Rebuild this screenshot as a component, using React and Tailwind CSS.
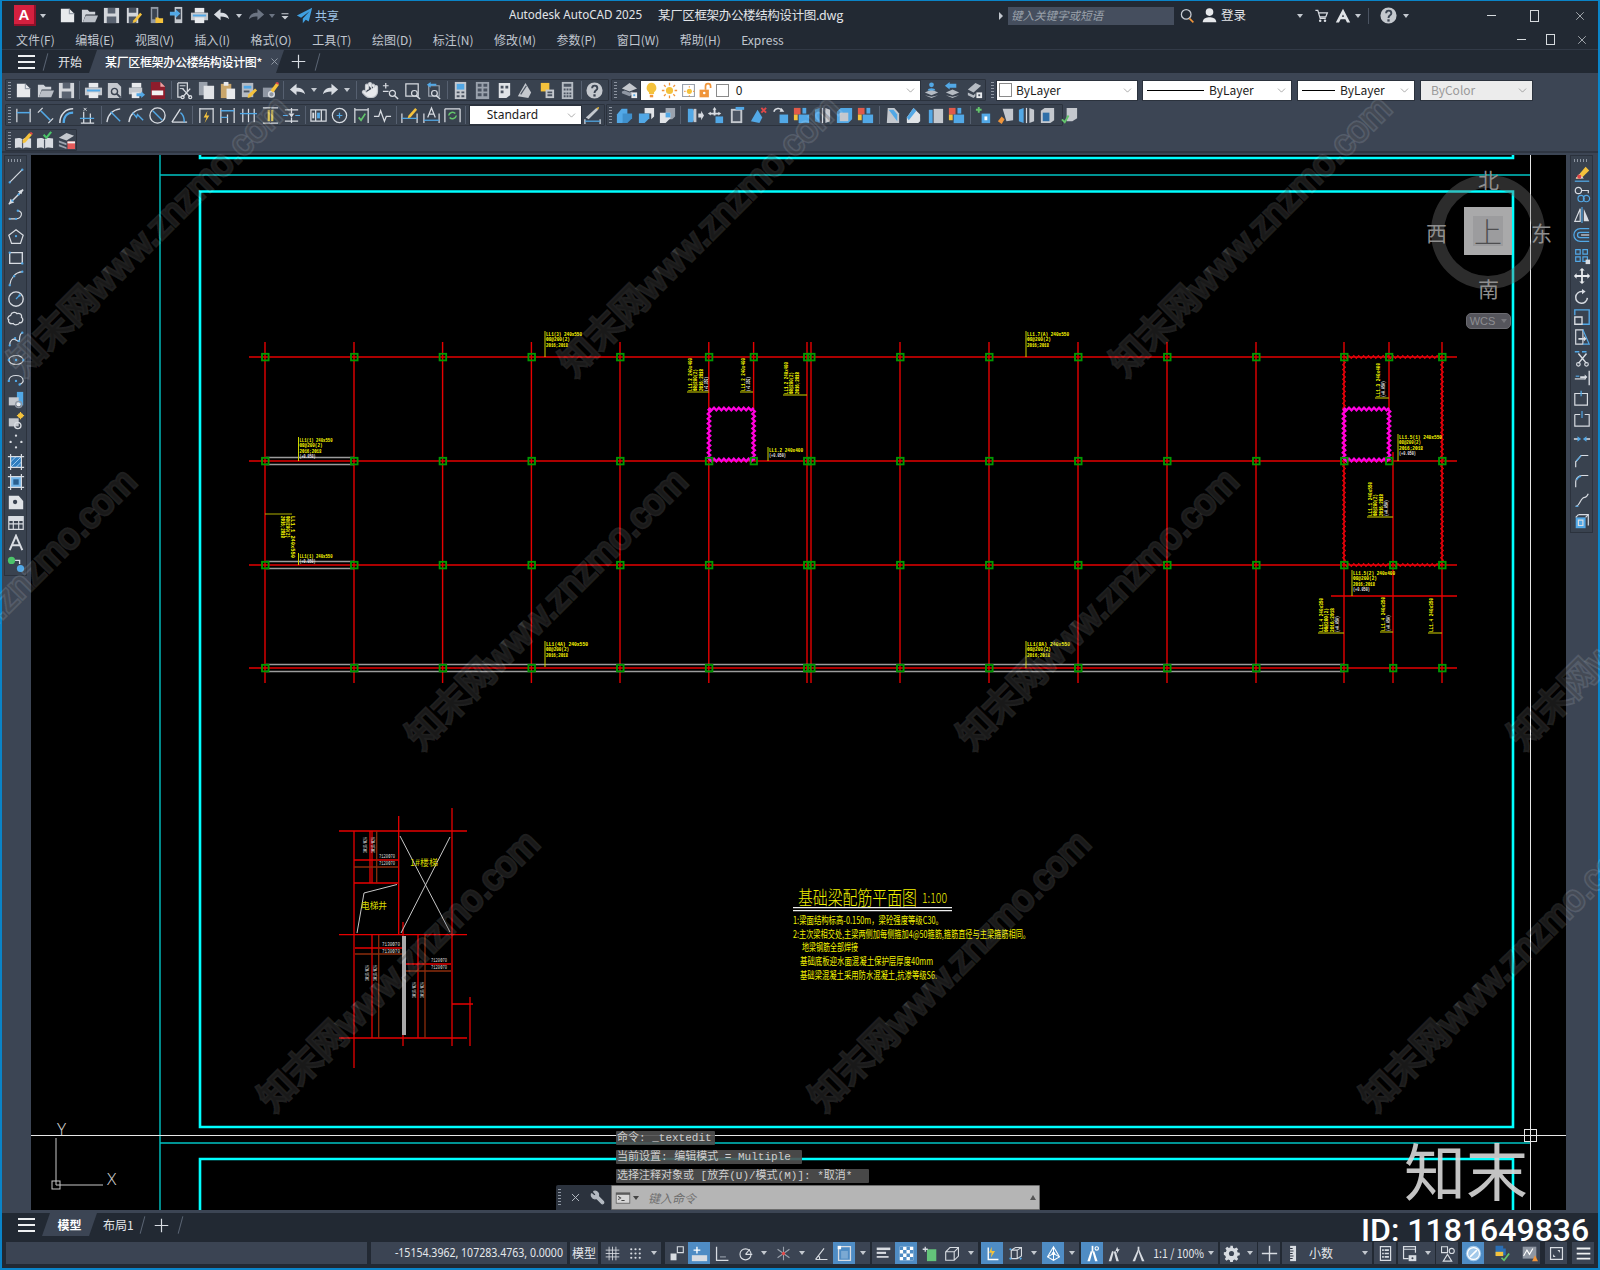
import React from 'react';
import { ChevronDown, Hand, X, Wrench } from 'lucide-react';

const W = '#d8dce2';
const G = '#9aa2ad';
const B = '#52a8e6';
const Y = '#f4c23c';
const O = '#f0953a';
const D = '#3a4351';

const dot = (x, y, r = 1.3) => `M${x - r} ${y}a${r} ${r} 0 1 0 ${2 * r} 0a${r} ${r} 0 1 0 ${-2 * r} 0`;
const dots = (...p) => p.map(([x, y]) => dot(x, y)).join('');

// [kind, path, colour, stroke width]: f = fill, s = stroke
const ICONS = {
  new: [['f', 'M3 3h9l5 5v9H3z', '#e8eaed'], ['s', 'M12 3v5h5', G]],
  open: [['f', 'M2 4h6l2 2h6v3H6l-3 8H2z', '#cfd3d9'], ['f', 'M6 10h13l-3 7H3z', '#b9bec6']],
  save: [['f', 'M2 2h16v16H2z', '#d3d6db'], ['f', 'M6 2h8v6H6zM5 11h10v7H5z', '#5a6371']],
  saveas: [['f', 'M3 2h12v16H3z', '#d3d6db'], ['f', 'M5 2h8v5H5zM5 11h8v7H5z', '#4a5361'], ['f', 'M10 15l7-8 2 2-7 8-3 1z', Y]],
  devOpen: [['f', 'M5 1h8v17H5z', '#8f97a3'], ['f', 'M6.5 3h5v11h-5z', '#3a4351'], ['f', 'M10 12h3l1 1h4v5h-8z', Y]],
  devSave: [['f', 'M7 1h8v17H7z', '#c4c8ce'], ['f', 'M8.5 3h5v11h-5z', '#3a4351'], ['f', 'M2 6h6V3.5L13 8l-5 4.5V10H2z', B]],
  print: [['f', 'M5 2h10v5H5z', '#e8eaed'], ['f', 'M1 7h18v8H1z', '#c4c8ce'], ['f', 'M5 12h10v6H5z', '#e8eaed'], ['f', 'M3 9h14v2H3z', B]],
  undo: [['f', 'M2 9l7-6v4c5 0 8 2 9 7-2-2-5-3-9-3v4z', '#d8dce2']],
  redo: [['f', 'M18 9l-7-6v4c-5 0-8 2-9 7 2-2 5-3 9-3v4z', '#d8dce2']],
  redoDim: [['f', 'M18 9l-7-6v4c-5 0-8 2-9 7 2-2 5-3 9-3v4z', '#6b7482']],
  lines: [['f', 'M5 6h10v1.5H5zM5 10h10l-5 5z', '#c8ccd2']],
  plane: [['f', 'M19 1L1 10l5 2.5L16 5 8 13.5V19l3.5-4 3.5 2z', '#3f9fe0']],
  preview: [['f', 'M3 2h10l4 4v12H3z', '#c4c8ce'], ['s', dot(10, 11, 3.2), '#3a4351', 1.5], ['s', 'M12.5 13.5l4 4', '#3a4351', 2]],
  publish: [['f', 'M5 2h10v5H5z', '#e8eaed'], ['f', 'M2 7h14v7H2z', '#c4c8ce'], ['f', 'M5 12h8v6H5z', '#e8eaed'], ['f', 'M10 13h5v-2l4 3.5-4 3.5v-2h-5z', B]],
  dwf: [['f', 'M3 1h10l5 5v13H3z', '#8e1d2c'], ['f', 'M4 10h12v5H4z', '#f2f2f2'], ['f', 'M13 1v5h5z', '#e9a3a3']],
  cut: [['s', 'M3 2h10v9M3 2v15h4', W], ['s', 'M5 5h6M5 8h4', W, 1], ['s', 'M8 8l8 9M16 8l-8 9', W, 1.5], ['s', dot(8, 17, 1.6) + dot(16, 17, 1.6), W]],
  copy: [['f', 'M2 1h9v14H2z', '#9aa2ad'], ['f', 'M7 5h11v14H7z', '#e0e3e7']],
  paste: [['f', 'M3 3h11v15H3z', '#c9a66b'], ['f', 'M6 1h5v4H6z', '#e8eaed'], ['f', 'M9 8h9v11H9z', '#e8eaed']],
  match: [['f', 'M3 2h12v15H3z', '#b5bbc3'], ['f', 'M5 5h8v3H5z', B], ['f', 'M5 10h6v2H5z', '#4a5361'], ['f', 'M10 14l7-6 2 2-7 7-3 1z', Y]],
  brush: [['f', 'M2 7h12v10H2z', '#8f97a3'], ['s', dot(11, 14, 3), W, 1.5], ['f', 'M10 10l6-8 3 2-6 8z', Y], ['f', 'M15 2l2-1 2 1-1 2z', '#e04848']],
  zoomrt: [['s', 'M2 5h6M5 2v6M2 11h6', W], ['s', dot(12, 13, 3.2), W], ['s', 'M14.5 15.5l3.5 3.5', W, 1.6]],
  zoomwin: [['s', 'M3 3h13v13H3z', W], ['s', dot(12, 13, 3), W], ['s', 'M14 15.5l4 3.5', W, 1.6]],
  zoomprev: [['s', 'M5 5h11v11H5z', G], ['f', 'M3 4l4-3v2h6v2H7v2z', B], ['s', dot(11, 13, 3), W], ['s', 'M13 15.5l4 3.5', W, 1.6]],
  props: [['f', 'M4 1h12v18H4z', '#c4c8ce'], ['f', 'M6 3h8v6H6z', B], ['f', 'M6 11h3v2H6zM11 11h3v2h-3zM6 15h3v2H6zM11 15h3v2h-3z', '#4a5361']],
  dc: [['f', 'M3 1h14v18H3z', '#9aa2ad'], ['f', 'M5 3h4v3H5zM11 3h4v3h-4zM5 8h4v3H5zM11 8h4v3h-4zM5 13h4v3H5zM11 13h4v3h-4z', '#4a5361']],
  palette: [['f', 'M5 2h12v13l-4 3H5z', '#e0e3e7'], ['f', 'M7 5h3v3H7zM12 5h3v3h-3zM7 10h3v3H7z', '#4a5361']],
  sheet: [['f', 'M3 16L11 2l6 10-3 6z', '#c4c8ce'], ['s', 'M6 14l6-9', '#4a5361']],
  markup: [['f', 'M4 2h9v9H4z', Y], ['f', 'M9 9h9v9H9z', '#c4c8ce'], ['f', 'M11 11h5v2h-5zM11 14h5v2h-5z', '#4a5361']],
  calc: [['f', 'M4 1h12v18H4z', '#b5bbc3'], ['f', 'M6 3h8v3H6zM6 8h2v2H6zM9 8h2v2H9zM12 8h2v2h-2zM6 12h2v2H6zM9 12h2v2H9zM12 12h2v2h-2zM6 15h2v2H6zM9 15h2v2H9zM12 15h2v2h-2z', '#4a5361']],
  help: [['f', dot(10, 10, 8.5), '#c4c8ce'], ['s', 'M7.5 7.5c0-3.5 5.5-3.5 5.5 0 0 2.5-3 2-3 5', '#3a4351', 2], ['f', 'M8.8 14h2.4v2.4H8.8z', '#3a4351']],
  layer: [['f', 'M2 8l8-6 8 6-8 3z', '#c4c8ce'], ['f', 'M2 11l3-1 5 2 3-1v3l-3 2-8-3z', '#8f97a3'], ['f', 'M12 12h6v6h-6z', '#e8eaed'], ['f', 'M14 14h2v2h-2z', B]],
  layerA: [['f', 'M3 12l7-3 7 3-7 3zM3 15l7 3 7-3-7 1.5z', '#b5bbc3'], ['f', dot(10, 4, 2.5), B], ['f', 'M6 10c0-3 8-3 8 0z', B]],
  layerB: [['f', 'M3 12l7-3 7 3-7 3zM3 15l7 3 7-3-7 1.5z', '#b5bbc3'], ['f', 'M2 5l5-4v2h7v4H7v2z', B]],
  layerC: [['f', 'M3 9l8-7 6 3-8 7zM3 12l6 3 2-2v3l-2 2-6-3z', '#b5bbc3'], ['f', 'M12 12h6v6h-6z', '#e8eaed'], ['f', 'M14 14h2v2h-2z', '#4a5361']],
  bookPen: [['f', 'M1 8c3-1 6-1 8 1 2-2 5-2 9-1v10c-4-1-7-1-9 1-2-2-5-2-8-1z', '#d8dce2'], ['s', 'M9 9v10', '#4a5361'], ['f', 'M9 10l7-8 3 2-7 8-3 1z', Y], ['f', 'M16 2l2-1 2 2-1 1z', '#e04848']],
  bookChk: [['f', 'M1 8c3-1 6-1 8 1 2-2 5-2 9-1v10c-4-1-7-1-9 1-2-2-5-2-8-1z', '#d8dce2'], ['s', 'M9 9v10', '#4a5361'], ['s', 'M8 4l3 3 5-6', '#4cc46a', 2.2]],
  layerRed: [['f', 'M2 7l8-5 8 3-8 5z', '#c4c8ce'], ['f', 'M2 10l8 3v2l-8-3zM2 14l8 3v2l-8-3z', '#9aa2ad'], ['f', 'M11 11h8v8h-8z', '#e45a5a'], ['f', 'M11 11h8v2h-8z', '#f2f2f2']],
  dimLinear: [['s', 'M3 3v14M17 3v14', W], ['s', 'M3 7h14', B, 1.6]],
  dimAligned: [['s', 'M2 7l5-5M13 18l5-5', W], ['s', 'M5 5l10 10', B, 1.6]],
  dimArc: [['s', 'M3 18C3 9 9 3 17 3', W, 1.6], ['s', 'M7 18C7 11 11 7 17 7', B, 2.4]],
  dimOrd: [['s', 'M3 18h14M6 18V6M13 18V8', W], ['s', 'M2 13h15', B], ['s', 'M6 2l3 3M9 2L6 5', W, 1]],
  dimRad: [['s', 'M2 17C3 9 8 4 16 3', W, 1.4], ['s', 'M6 6l10 10', B, 1.5]],
  dimJog: [['s', 'M2 17C3 9 8 4 16 3', W, 1.4], ['s', 'M6 7l4 5 1-3 6 6', B, 1.5]],
  dimDia: [['s', dot(10, 10, 8), W, 1.4], ['s', 'M5 5l10 10', B, 1.5]],
  dimAng: [['s', 'M2 17h16M2 17L11 3', W, 1.4], ['s', 'M11 7c3 2 4 6 4 10', B, 1.5]],
  dimQuick: [['s', 'M3 2v16M17 2v16M3 3h14', W], ['f', 'M11 5l-4 7h3l-2 6 5-8h-3z', Y]],
  dimBase: [['s', 'M3 2v16M17 2v16M10 9v9', W], ['s', 'M3 5h14M3 12h7', B, 1.4]],
  dimCont: [['s', 'M4 3v14M10 3v14M16 3v14', W], ['s', 'M1 8h18', B, 1.4]],
  dimSpace: [['f', 'M7 4h6v12H7z', '#d9c45a'], ['s', 'M2 2h16M2 18h16', W, 1.5], ['s', 'M10 2v16', '#4a5361']],
  dimBreak: [['s', 'M3 4h14M10 2v6M10 12v6M3 16h14', W], ['f', 'M7 8h6l-3 4z', W], ['s', 'M1 10h5M14 10h5', B]],
  tol: [['s', 'M2 4h16v12H2zM7 4v12M13 4v12', W], ['f', 'M3.5 7h2v6h-2z', W], ['f', 'M8.5 7h3v6h-3z', B]],
  center: [['s', dot(10, 10, 7.5), W], ['s', 'M10 7v6M7 10h6', B]],
  inspect: [['s', 'M3 2v16M17 2v16M3 4h14', W], ['f', 'M7 9h7v7H7z', '#3a4351'], ['s', 'M7 12l2.5 3L14 8', '#63c46b', 1.8]],
  jogline: [['s', 'M1 11h5l2-6 4 11 2-5h5', W]],
  dimEdit: [['s', 'M2 8v10M18 8v10', W], ['s', 'M2 13h16', B], ['f', 'M9 10l7-8 2 2-7 8-3 1z', Y]],
  dimText: [['s', 'M2 8v10M18 8v10', W], ['s', 'M2 15h16', B], ['s', 'M6 12L10 2l4 10M7.5 8.5h5', W]],
  dimUpd: [['s', 'M2 3v14M18 3v14M2 3h16', W], ['s', 'M6 10a4 4 0 0 1 7-2M14 10a4 4 0 0 1-7 2', '#63c46b', 1.6]],
  dimStyle: [['s', 'M2 14v5M18 14v5', W], ['s', 'M2 16h16', B], ['f', 'M3 12L14 2l2 2L6 14z', '#c4c8ce'], ['f', 'M14 2l2 2 1-3z', Y]],
  uni: [['f', 'M2 9l5-6h6v9l-5 6H2z', B], ['f', 'M8 8h10v5l-5 5H8z', '#3f8fcb']],
  sub: [['f', 'M8 2h10v9l-3 3V8H8z', '#e0e3e7'], ['f', 'M2 8h11v5l-5 5H2z', B]],
  int: [['f', 'M8 2h10v9l-3 3H8z', '#9aa2ad'], ['f', 'M2 7h11v6l-5 5H2z', '#e0e3e7'], ['f', 'M8 7h5v5H8z', B]],
  ext: [['f', 'M3 3h5c3 3 3 11 0 14H3z', B], ['f', 'M9 3h3v14H9z', '#c4c8ce'], ['f', 'M14 8h3V5l3 5-3 5v-3h-3z', W]],
  move3: [['f', 'M9 1l2 3h-1v3h3V6l3 2-3 2V9h-3v1H8V9H5v1L2 8l3-2v1h3V4H7z', W], ['f', 'M10 11h8v7h-8z', B]],
  copy3: [['f', 'M3 3h12v15H3z', '#c4c8ce'], ['f', 'M5 5h8v11H5z', '#4a5361'], ['f', 'M8 1h9v3H8z', B]],
  del3: [['f', 'M2 16L9 4l5 8-3 6z', B], ['s', 'M13 2l5 5M18 2l-5 5', '#e04848', 2]],
  rot3: [['s', 'M3 6a5 5 0 0 1 9-1', W, 1.6], ['f', 'M11 2l3 4-5 0z', W], ['f', 'M9 9h9v9H9z', B]],
  col: [['f', 'M2 2h7v7H2z', '#e15a4a'], ['f', 'M11 2h4v6h-4z', B], ['f', 'M7 9h11v9H7z', B], ['f', 'M2 9h4v6H2z', Y]],
  cop2: [['f', 'M6 2h12v12l-4 4H2V6z', B], ['f', 'M5 7h9v9H5z', '#c4c8ce']],
  bev: [['f', 'M5 2h7l5 6v10H4z', '#c4c8ce'], ['f', 'M6 4h5l4 5v7', B]],
  fil: [['f', 'M10 2l7 7v7l-2 2H3v-6z', '#e0e3e7'], ['f', 'M3 12L10 2l3 3-8 10z', B]],
  sh1: [['f', 'M3 4h4v14H3z', B], ['f', 'M8 3h10v15H8z', '#c4c8ce']],
  plus3: [['s', 'M5 1v6M2 4h6', '#63c46b', 2], ['f', 'M8 8h9v10H8z', B], ['f', 'M11 11h3v4h-3z', '#fff']],
  cyl1: [['f', 'M7 3h11v12l-7 1z', '#c4c8ce'], ['f', 'M2 16l4-5 3 3-3 5z', O]],
  sh2: [['f', 'M2 4l5-2v16l-5-2z', B], ['f', 'M13 2l5 2v12l-5 2z', '#c4c8ce'], ['s', 'M10 2v16', W]],
  box3: [['f', 'M3 5l4-3h10v13l-4 3H3z', '#c4c8ce'], ['f', 'M5 7h7v9H5z', '#2f6fa8']],
  chk3: [['f', 'M7 2h11v11l-5 3H7z', '#c4c8ce'], ['s', 'M2 14l3 3 4-7', '#63c46b', 2]],
  bulb: [['f', 'M10 1a6 6 0 0 1 3 11v2H7v-2a6 6 0 0 1 3-11z', Y], ['f', 'M8 15h4v3H8z', O]],
  sun: [['f', dot(10, 10, 4.2), Y], ['s', 'M10 1v3M10 16v3M1 10h3M16 10h3M3.5 3.5l2 2M14.5 14.5l2 2M16.5 3.5l-2 2M3.5 16.5l2-2', O, 1.5]],
  frozen: [['s', 'M3 3h14v14H3z', '#9aa2ad'], ['f', dot(11, 11, 3), Y], ['s', 'M11 5v1.5M11 15.5V17M5 11h1.5M15.5 11H17', O]],
  lock: [['f', 'M3 9h11v9H3z', O], ['s', 'M10 9V5a3 3 0 0 1 6 0v2', O, 2], ['f', dot(8.5, 13, 1.5), '#fff']],
  line: [['s', 'M3 17L17 3', W], ['f', dots([3, 17], [17, 3]), B]],
  xline: [['s', 'M2 18L18 2', W, 1.6], ['f', 'M12 4l6-3-2 6zM2 18l2-6 4 4z', W], ['f', dots([6, 14], [13, 7]), B]],
  pline: [['s', 'M3 12h7c6 0 9-8 2-9', W], ['f', dots([3, 12], [10, 12], [12, 3]), B]],
  polygon: [['s', 'M10 2l8 6-3 9H5L2 8z', W], ['f', dots([10, 9]), B]],
  rect: [['s', 'M3 4h14v12H3z', W, 1.5], ['f', dots([3, 4], [17, 16]), B]],
  arc: [['s', 'M3 18C4 10 9 4 17 3', W], ['f', dots([3, 18], [8, 8], [17, 3]), B]],
  circle: [['s', dot(10, 10, 8), W, 1.5], ['s', 'M10 10l4-4', B], ['f', dots([14, 6]), B]],
  cloud: [['s', 'M4 6c1-4 6-4 7-2 3-1 6 1 5 4 3 2 1 7-2 6-1 3-6 3-7 1-4 1-6-2-5-4-2-1-1-4 2-5z', W, 1.4]],
  spline: [['s', 'M3 17c0-6 4-8 7-6s4 3 4-1 1-6 3-7', W], ['f', dots([3, 17], [9, 9], [13, 12], [17, 3]), B]],
  ellipse: [['s', 'M2 10c0-3 4-5 8-5s8 2 8 5-4 5-8 5-8-2-8-5z', W], ['f', dots([2, 10], [18, 10], [10, 10]), B]],
  earc: [['s', 'M2 11c0-4 4-6 8-6s8 2 8 6c0 2-2 3-4 4', W], ['f', dots([2, 11], [14, 15], [10, 11]), B]],
  insert: [['f', 'M11 1h7v15h-7z', B], ['f', 'M2 7h11v9H2z', '#c4c8ce'], ['s', dot(13, 15, 3.5), '#8f97a3', 1.5], ['f', dot(13, 15, 2.2), '#e8eaed']],
  block: [['f', 'M2 7h11v9H2z', '#c4c8ce'], ['f', dot(15, 4, 3), Y], ['s', 'M15 0v8M11 4h8', Y], ['s', dot(12, 15, 3.5), W, 1.5]],
  point: [['f', dots([10, 4], [4, 11], [16, 11], [10, 17]), W]],
  hatch: [['f', 'M4 4h12v12H4z', '#2f7dbf'], ['s', 'M4 10l6-6M4 16L16 4M10 16l6-6', '#a8d4f5', 1], ['s', 'M1 4h18M1 16h18M4 1v18M16 1v18', W]],
  gradient: [['f', 'M4 4h12v12H4z', '#6fb3e8'], ['f', 'M7 7h6v6H7z', '#2a5f8f'], ['s', 'M1 4h18M1 16h18M4 1v18M16 1v18', W]],
  region: [['f', 'M2 3h11l5 6v9H2z', '#e0e3e7'], ['f', dot(9, 10, 2.4), D]],
  table: [['s', 'M2 3h16v14H2zM2 7h16M2 11h16M7 7v10M13 7v10', W], ['f', 'M2 3h16v4H2z', W]],
  mtext: [['s', 'M3 18L10 2l7 16M5.5 12.5h9', W, 2.2]],
  addsel: [['f', dot(5, 6, 4), '#4cc46a'], ['f', dot(15, 15, 4), B], ['s', 'M9 6h5v4', W, 1.5]],
  erase: [['f', 'M3 15L14 2l4 4-9 9z', Y], ['f', 'M3 15l4-5 5 5H4z', '#e8eaed'], ['f', dot(7, 13, 2.4), '#e04848'], ['s', 'M2 18h16', B, 1.4]],
  copy2: [['s', dot(6, 5, 3.5), W], ['s', 'M10 5h7v3', W], ['s', dot(9, 14, 3.5) + dot(15, 14, 3.5), B]],
  mirror: [['s', 'M8 3v14H2z', W], ['f', 'M12 3v14h6z', W], ['s', 'M10 1v18', B]],
  offset: [['s', 'M18 3H8a5 5 0 0 0 0 14h10M18 7H8a2 2 0 0 0 0 6h10', B, 1.4], ['s', 'M18 10H9', W]],
  array: [['s', 'M3 3h5v5H3zM11 3h5v5h-5zM3 11h5v5H3zM11 11h5v5h-5z', B], ['f', 'M14 14h5v5h-5z', W]],
  move: [['f', 'M10 1l3 3h-2v5h5V7l3 3-3 3v-2h-5v5h2l-3 3-3-3h2v-5H4v2l-3-3 3-3v2h5V4H7z', '#e8eaed']],
  rotate: [['s', 'M16 11a6.5 6.5 0 1 1-6-7', W, 1.6], ['f', 'M10 1l4 3-4 3z', W]],
  scale: [['s', 'M2 8V2h16v16h-8', B, 1.5], ['s', 'M2 10h8v8H2z', W, 1.5]],
  stretch: [['s', 'M3 2h8v16H3z', W], ['s', 'M11 2l7 16h-7', B], ['f', 'M6 11h6V9l3 3-3 3v-2H6z', W]],
  trim: [['s', 'M2 3h5M10 3h5', B, 1.5], ['s', 'M6 5l9 11M15 5L6 16', W, 1.6], ['s', dot(6, 17, 2) + dot(15, 17, 2), W]],
  extend: [['s', 'M18 2v16', W, 1.5], ['s', 'M2 11h12', W], ['f', 'M8 8h5V6l3 3-3 3v-2H8z', W], ['s', 'M3 8h4', B]],
  breakpt: [['s', 'M2 5h14v13H2z', W], ['s', 'M9 2v6', B, 1.4]],
  break: [['s', 'M2 5v13h16V5h-5M8 5H2', W], ['s', 'M10 1v8', B]],
  join: [['s', 'M1 10h6M13 10h6', W, 1.5], ['f', 'M5 7l4 3-4 3zM15 7l-4 3 4 3z', B]],
  chamfer: [['s', 'M3 18v-6l6-7h8', W], ['s', 'M4 11l5-6', B]],
  fillet: [['s', 'M3 18v-6c0-4 3-7 7-7h7', W], ['s', 'M4 10c1-2 3-4 5-4', B]],
  blend: [['s', 'M3 17c5 0 5-10 10-10 2 0 3-2 4-4', W], ['s', 'M3 17h3', B]],
  explode: [['f', 'M3 6h11v12H3z', B], ['s', 'M6 3h11v12', W], ['s', 'M3 6l3-3M14 6l3-3M6 9h5v6H6z', W]],
  grid: [['s', 'M6 2v16M10 2v16M14 2v16M2 6h16M2 10h16M2 14h16', W, 1]],
  snapg: [['f', dots([5, 5], [10, 5], [15, 5], [5, 10], [10, 10], [15, 10], [5, 15], [10, 15], [15, 15]), W]],
  infer: [['s', 'M11 2h7v7h-7z', W], ['f', 'M3 10h7v8H3z', W]],
  dyn: [['f', 'M1 12h18v7H1z', W], ['s', 'M7 2v8M3 6h8', '#fff', 1.6]],
  ortho: [['s', 'M3 2v16h14', W, 1.5], ['s', 'M7 14h7', G]],
  polar: [['s', dot(10, 11, 6.5), W], ['s', 'M10 11h8M10 11l5-6', W]],
  iso: [['s', 'M10 2v16M3 5l14 10M3 15l14-10', G], ['f', dot(10, 10, 2), '#e04848']],
  angle: [['s', 'M3 17h14M3 17L13 4M8 17c0-2-1-4-2-5', W]],
  osnap: [['s', 'M3 2h14v16H3z', W, 1.5], ['f', 'M2 1h4v4H2z', '#fff'], ['f', 'M6 7h8v9H6z', '#ffffff40']],
  lw: [['f', 'M2 3h16v3H2z', W], ['f', 'M2 8h11v2.5H2z', W], ['f', 'M2 13h14v2H2z', W]],
  trans: [['f', 'M2 2h16v16H2z', '#fff'], ['f', 'M2 2h4v4H2zM10 2h4v4h-4zM6 6h4v4H6zM14 6h4v4h-4zM2 10h4v4H2zM10 10h4v4h-4zM6 14h4v4H6zM14 14h4v4h-4z', '#4f8cc4']],
  selcyc: [['f', 'M7 5h11v14H7z', '#63c47a'], ['s', 'M2 5h6M5 2v6', W, 1.5]],
  snap3d: [['s', 'M2 8l5-5h10v10l-5 5H2zM2 8h10v10M12 8l5-5', W]],
  dynucs: [['s', 'M5 3v14h12', '#fff', 1.6], ['f', 'M9 2l-3 7h3l-1 6 5-8H9z', Y]],
  dyn3: [['s', 'M5 6l5-3h7v10l-5 3H5zM5 6h7v10M12 6l5-3', W], ['f', dots([4, 5], [16, 16], [4, 16]), B]],
  gizmo: [['s', 'M10 2L3 14l7 4 7-4zM10 2v16', '#fff', 1.2], ['s', 'M3 14l7-4 7 4', '#fff', 1.2], ['f', dot(10, 10, 2), '#fff']],
  annoA: [['f', 'M10 8l-3 11h-3l4-12zM10 8l3 11h3L12 7z', '#fff'], ['s', 'M10 8V1', '#fff', 2], ['s', dot(15, 4, 2), '#fff']],
  annoB: [['f', 'M8 8l-3 11h-3l4-12zM8 8l3 11h3L10 7z', W], ['f', 'M12 2l-2 5h2l-1 4 4-6h-2z', W]],
  annoC: [['f', 'M10 8l-4 11H3l6-13zM10 8l4 11h3L11 6z', W], ['s', 'M10 7V2', W, 2]],
  plus: [['s', 'M10 1v18M1 10h18', W, 1.6]],
  ruler: [['f', 'M6 1h7v18H6z', W], ['s', 'M6 4h3M6 7h4M6 10h3M6 13h4M6 16h3', '#2b3340', 1.2]],
  qp: [['s', 'M4 2h12v16H4z', W, 1.4], ['f', 'M6 5h2v2H6zM9 5h5v2H9zM6 9h2v2H6zM9 9h5v2H9zM6 13h2v2H6zM9 13h5v2H9z', W]],
  lockui: [['s', 'M3 2h14v3H3zM3 5v11h6M17 5v4', W, 1.4], ['f', 'M9 12h9v7H9z', W], ['f', dot(13.5, 15.5, 1.2), D]],
  isolate: [['s', 'M3 2h7v7H3z', W], ['s', dot(15, 7, 3), W], ['s', 'M10 11l-5 8h10z', W]],
  hw: [['f', dot(10, 10, 9), '#a3c9ea'], ['s', dot(10, 10, 7), '#fff', 1.4], ['s', 'M6 14l8-8', '#fff', 1.8]],
  update: [['f', 'M3 1h9v3h3v8H3z', '#2b6fb5'], ['f', 'M3 8h9v5H3z', Y], ['s', 'M10 15l3 3 6-8', '#63c46b', 2]],
  perf: [['f', 'M2 2h16v14H2z', '#8f97a3'], ['s', 'M3 13l4-7 3 5 4-7', '#fff'], ['f', 'M13 19l3.5-7 3.5 7z', O]],
  clean: [['s', 'M3 3h14v14H3z', W, 1.4], ['f', 'M6 11v3h3zM14 9V6h-3z', W]],
  menu: [['f', 'M2 3h16v2.2H2zM2 9h16v2.2H2zM2 15h16v2.2H2z', '#eef0f2']],
  prompt: [['f', 'M1 3h18v14H1z', '#5b5b5b'], ['f', 'M2 6h16v10H2z', '#d7d7d7'], ['s', 'M4 8l3 2-3 2M8 13h4', '#444']],
  search: [['s', dot(9, 8, 6), '#c6cbd2', 1.6], ['s', 'M13 13l5 5', O, 2]],
  user: [['f', dot(10, 6, 4.5), '#e6e8eb'], ['f', 'M2 18c0-5 5-6 8-6s8 1 8 6z', '#e6e8eb']],
  cart: [['s', 'M3 3h3l3 10h7M7 6h11l-2 5H8', W, 1.5], ['f', dot(9, 16, 1.6) + dot(15, 16, 1.6), W]],
  adsk: [['f', 'M10 1L1 18h4l2-4h6l2 4h4zM8.5 11L10 8l1.5 3z', '#e0e3e7']],
  gear: [['f', 'M8.5 1h3l.4 2.4 1.9.8 2-1.4 2.1 2.1-1.4 2 .8 1.9 2.4.4v3l-2.4.4-.8 1.9 1.4 2-2.1 2.1-2-1.4-1.9.8-.4 2.4h-3l-.4-2.4-1.9-.8-2 1.4-2.1-2.1 1.4-2-.8-1.9L1 11.5v-3l2.4-.4.8-1.9-1.4-2 2.1-2.1 2 1.4 1.9-.8z', '#d8dce2'], ['f', dot(10, 10, 3), '#3b4453']],
};

const Ic = ({ n, className = '' }) => (
  <svg viewBox="0 0 20 20" className={`shrink-0 w-[19px] h-[19px] ${className}`}>
    {(ICONS[n] || []).map(([k, d, c, w], i) =>
      k === 'f'
        ? <path key={i} d={d} fill={c || W} />
        : <path key={i} d={d} fill="none" stroke={c || W} strokeWidth={w || 1.3} />
    )}
  </svg>
);

const Caret = ({ className = 'border-t-[#c3c8cf]' }) => (
  <span className={`block w-0 h-0 border-x-[3px] border-x-transparent border-t-[4px] ${className}`} />
);

const Grip = () => (
  <span className="block w-[3px] h-[17px] mx-[2px] shrink-0 bg-[repeating-linear-gradient(#8d95a1_0_1px,transparent_1px_3px)]" />
);

const Strip = ({ items }) => items.map((t, i) => {
  if (t === '|') return <span key={i} className="w-[5.6px] h-[18px] shrink-0 flex justify-center"><span className="w-px h-full bg-[#566070]" /></span>;
  if (t === 'v') return <span key={i} className="w-[12px] shrink-0 flex justify-center"><Caret /></span>;
  if (t === 'g') return <span key={i} className="w-[7px] shrink-0 flex justify-center"><Grip /></span>;
  if (t === 'pan') return <span key={i} className="w-[21.4px] shrink-0 flex justify-center"><Hand size={18} strokeWidth={1.6} fill="#e8eaed" className="text-[#c4c8ce]" /></span>;
  return <span key={i} className="w-[21.4px] shrink-0 flex justify-center"><Ic n={t} /></span>;
});

const Panel = ({ className = '', children }) => (
  <div className={`flex items-center shrink-0 bg-[#39424f] border border-[#2b323d] rounded-[1px] ${className}`}>{children}</div>
);

const Drop = ({ className = '', children, dim }) => (
  <div className={`flex items-center shrink-0 h-[21px] border border-[#2b323d] whitespace-nowrap ${dim ? 'bg-[#ececec] text-[#9a9a9a]' : 'bg-white text-[#1c1c1c]'} ${className}`}>
    {children}
    <ChevronDown size={13} strokeWidth={1} className="ml-auto mr-[3px] text-[#666]" />
  </div>
);

const Ham = () => (
  <span className="w-[17px] h-[14px] flex flex-col justify-between shrink-0">
    <span className="h-[2px] bg-[#eef0f2]" /><span className="h-[2px] bg-[#eef0f2]" /><span className="h-[2px] bg-[#eef0f2]" />
  </span>
);

const Slash = () => <span className="block w-px h-[18px] bg-[#5a6473] rotate-[15deg] shrink-0" />;

const MENUS = ['文件(F)', '编辑(E)', '视图(V)', '插入(I)', '格式(O)', '工具(T)', '绘图(D)', '标注(N)', '修改(M)', '参数(P)', '窗口(W)', '帮助(H)', 'Express'];

const ROW1A = ['g', 'new', 'open', 'save', '|', 'print', 'preview', 'publish', 'dwf', '|', 'cut', 'copy', 'paste', 'match', 'brush', '|', 'undo', 'v', 'redo', 'v', '|', 'pan', 'zoomrt', 'zoomwin', 'zoomprev', '|', 'props', 'dc', 'palette', 'sheet', 'markup', 'calc', '|', 'help'];
const ROW2A = ['g', 'dimLinear', 'dimAligned', 'dimArc', 'dimOrd', '|', 'dimRad', 'dimJog', 'dimDia', 'dimAng', '|', 'dimQuick', 'dimBase', 'dimCont', 'dimSpace', 'dimBreak', '|', 'tol', 'center', 'inspect', 'jogline', '|', 'dimEdit', 'dimText', 'dimUpd', '|'];
const ROW2B = ['g', 'uni', 'sub', 'int', '|', 'ext', 'move3', 'copy3', 'del3', 'rot3', 'col', 'sh2', 'cop2', 'col', '|', 'bev', 'fil', 'sh1', 'col', '|', 'plus3', 'cyl1', 'sh2', 'box3', 'chk3'];
const LEFT = ['line', 'xline', 'pline', 'polygon', 'rect', 'arc', 'circle', 'cloud', 'spline', 'ellipse', 'earc', 'insert', 'block', 'point', 'hatch', 'gradient', 'region', 'table', 'mtext', 'addsel'];
const RIGHT = ['erase', 'copy2', 'mirror', 'offset', 'array', 'move', 'rotate', 'scale', 'stretch', 'trim', 'extend', 'breakpt', 'break', 'join', 'chamfer', 'fillet', 'blend', 'explode'];

// drawing data, in page coordinates
const COLS = [265, 354, 442.6, 531.4, 620, 708.8, 807, 811, 900, 989, 1078, 1167, 1256, 1344, 1442];
const ROWS = [357, 461, 565, 668];

const zig = (x1, y1, x2, y2) => {
  const len = Math.hypot(x2 - x1, y2 - y1);
  const n = Math.floor(len / 2.4);
  const pts = [];
  for (let i = 0; i <= n; i++) {
    const t = i / n;
    const a = i % 2 ? 1.3 : -1.3;
    pts.push(`${(x1 + (x2 - x1) * t + (y1 === y2 ? 0 : a)).toFixed(1)},${(y1 + (y2 - y1) * t + (y1 === y2 ? a : 0)).toFixed(1)}`);
  }
  return pts.join(' ');
};

// [text, length]: rows starting with "w" are white
const H_NOTES = [
  { x: 545, y1: 331, y2: 357, rows: [['LL1(3) 240x550', 36], ['Φ8@200(2)', 24], ['2Φ16;2Φ18', 22]] },
  { x: 298.5, y1: 437, y2: 461, rows: [['LL1(1) 240x550', 33], ['Φ8@200(2)', 23], ['2Φ16;2Φ18', 22], ['w(+0.050)', 16]] },
  { x: 298.5, y1: 553, y2: 565, rows: [['LL1(1) 240x550', 33], ['w(+0.050)', 16]] },
  { x: 545, y1: 641, y2: 667, rows: [['LL1(4A) 240x550', 42], ['Φ8@200(2)', 23], ['2Φ16;2Φ18', 22]] },
  { x: 768, y1: 447, y2: 461, rows: [['LL1.2 240x400', 34], ['w(+0.050)', 17]] },
  { x: 1026, y1: 331, y2: 357, rows: [['LL1.7(A) 240x550', 42], ['Φ8@200(2)', 24], ['2Φ16;2Φ18', 22]] },
  { x: 1026, y1: 641, y2: 668, rows: [['LL1(8A) 240x550', 43], ['Φ8@200(2)', 24], ['2Φ16;2Φ18', 23]] },
  { x: 1398, y1: 434, y2: 461, rows: [['LL1.5(1) 240x550', 43], ['Φ8@200(2)', 22], ['2Φ16;2Φ18', 24], ['w(+0.050)', 17]] },
  { x: 1352, y1: 570, y2: 596, rows: [['LL1.5(2) 240x400', 42], ['Φ8@200(2)', 24], ['2Φ16;2Φ18', 22], ['w(+0.050)', 17]] },
];
const V_NOTES = [
  { y: 392, x1: 687, x2: 709, cols: [['LL1.2 240x400', 33], ['Φ8@200(2)', 22], ['2Φ16;2Φ18', 22], ['w(+0.050)', 14]] },
  { y: 392, x1: 740, x2: 753, cols: [['LL1.2 240x400', 33], ['w(+0.050)', 14]] },
  { y: 395, x1: 783, x2: 807, cols: [['LL1.2 240x400', 32], ['Φ8@200(2)', 22], ['2Φ16;2Φ18', 22]] },
  { y: 398, x1: 1375, x2: 1389, cols: [['LL1.3 240x400', 34], ['w(+0.050)', 16]] },
  { y: 517, x1: 1367, x2: 1393, cols: [['LL1.1 240x550', 34], ['Φ8@200(2)', 22], ['2Φ16;2Φ18', 22], ['w(+0.050)', 16]] },
  { y: 633, x1: 1318, x2: 1344, cols: [['LL1.4 240x350', 34], ['Φ8@200(2)', 24], ['2Φ16;2Φ18', 24], ['w(+0.050)', 16]] },
  { y: 632, x1: 1380, x2: 1393, cols: [['LL1.4 240x350', 34], ['w(+0.050)', 16]] },
  { y: 633, x1: 1428, x2: 1442, cols: [['LL1.4 240x350', 34]] },
];
const MINI = "'Liberation Mono', 'Noto Sans CJK SC', monospace";

const Annotations = () => (
  <g fontFamily={MINI} fontSize="6" fontWeight="700">
    {H_NOTES.map((n, i) => (
      <g key={i}>
        <path d={`M${n.x} ${n.y1}V${n.y2}`} stroke="#d0d000" strokeWidth="1" />
        {n.rows.map(([t, w], j) => (
          <text key={j} x={n.x + 1} y={n.y1 + 5 + j * 5.3} textLength={w} lengthAdjust="spacingAndGlyphs" fill={t[0] === 'w' ? '#eee' : '#ffff00'}>{t.replace(/^w/, '')}</text>
        ))}
      </g>
    ))}
    {V_NOTES.map((n, i) => (
      <g key={i}>
        <path d={`M${n.x1} ${n.y}H${n.x2}`} stroke="#b0b000" strokeWidth="1.2" />
        {n.cols.map(([t, w], j) => {
          const x = n.x1 + 5 + j * 5.3;
          return <text key={j} x={x} y={n.y - 1} transform={`rotate(-90 ${x} ${n.y - 1})`} textLength={w} lengthAdjust="spacingAndGlyphs" fill={t[0] === 'w' ? '#eee' : '#ffff00'}>{t.replace(/^w/, '')}</text>;
        })}
      </g>
    ))}
    <path d="M265 514H292" stroke="#b0b000" strokeWidth="1" />
    {[[281, 516, 22, '2Φ16;2Φ18'], [286, 516, 22, 'Φ8@200(2)'], [291, 516, 42, 'LL1.1 240x550']].map(([x, y, w, t]) => (
      <text key={x} x={x} y={y} transform={`rotate(90 ${x} ${y})`} textLength={w} lengthAdjust="spacingAndGlyphs" fill="#ffff00">{t}</text>
    ))}
  </g>
);

const STAIR_RED = 'M339 831H467M339 934.7H467M339 1038H467M398.7 816V935M452 808V1046M354 831V1068M370 831V883M372 831V883M354 860H398M354 883H398M372 935V1038M355 948H402M403 922V1046M418 935V1038M402 964H451M470 997V1046M452 1004H473';
const STAIR_BROWN = 'M376.7 831V883M354 867H398M378.7 935V1038M355 954H402M425 935V1038M402 971H451';
const STAIR_DIMS = [
  [379, 858, 16, 0, '7120Φ70'], [379, 865, 16, 0, '7120Φ70'], [382, 946, 18, 0, '7130Φ70'], [382, 953, 18, 0, '7130Φ70'],
  [431, 962, 16, 0, '7120Φ70'], [431, 969, 16, 0, '7120Φ70'],
  [367, 853, 16, 1, '3Φ18/Φ20'], [375, 853, 16, 1, '3Φ18/Φ20'], [369, 981, 16, 1, '3Φ18/Φ20'], [377, 981, 16, 1, '3Φ18/Φ20'],
  [416, 998, 16, 1, '3Φ18/Φ20'], [424, 998, 16, 1, '3Φ18/Φ20'],
];

const Drawing = () => (
  <svg viewBox="31 155 1535 1055" className="block w-full h-full">
    {/* frames */}
    <g fill="none" stroke="#00ffff">
      <path d="M160 155V1210M160 175H1530M160 1143H1530" stroke="#00c4c4" strokeWidth="1.4" />
      <path d="M200 155V158H1513V155M200 191.5H1513V1127H200ZM200 1210V1159H1513V1210" strokeWidth="2.6" />
    </g>

    {/* grid */}
    <g stroke="#e60000" strokeWidth="1.4" fill="none">
      {COLS.map((x) => <path key={x} d={`M${x} 342V683`} />)}
      {ROWS.map((y) => <path key={y} d={`M249 ${y}H1457`} />)}
      <path d="M753.6 342V461M1389 342V461M1393 452V683M1331 596H1457" />
    </g>
    <path d="M266 457.5H354M266 464.5H354M266 561.5H354M266 568.5H354M266 664.5H1344M266 671.5H1344" stroke="#9c9c9c" strokeWidth="1.7" />
    <g fill="none" stroke="#e8000c" strokeWidth="1.2">
      <polyline points={zig(1344, 357, 1442, 357)} />
      <polyline points={zig(1344, 565, 1442, 565)} />
      <polyline points={zig(1344, 360, 1344, 565)} />
      <polyline points={zig(1442, 360, 1442, 565)} />
    </g>
    <g fill="none" stroke="#ff00e0" strokeWidth="2.2">
      {[[709, 753.6], [1344, 1389]].map(([a, b]) => (
        <g key={a}>
          <polyline points={zig(a, 409, b, 409)} />
          <polyline points={zig(a, 460, b, 460)} />
          <polyline points={zig(a, 409, a, 460)} />
          <polyline points={zig(b, 409, b, 460)} />
        </g>
      ))}
    </g>

    {/* columns */}
    <g fill="none" stroke="#009a00" strokeWidth="1.8">
      {ROWS.flatMap((y) => COLS.map((x) => (
        <rect key={`${x}-${y}`} x={x - 3} y={y - 3.2} width="6.6" height="6.6" />
      )))}
      {[[753.6, 357], [753.6, 461], [1389, 357], [1389, 461], [1393, 565], [1393, 668]].map(([x, y]) => (
        <rect key={`${x}-${y}`} x={x - 3} y={y - 3.2} width="6.4" height="6.6" />
      ))}
    </g>

    <Annotations />

    {/* stair detail */}
    <path d={STAIR_RED} fill="none" stroke="#e60000" strokeWidth="1.3" />
    <path d={STAIR_BROWN} fill="none" stroke="#8a2c0c" strokeWidth="1.3" />
    <path d="M400 836L450 932M450 837L401 933M357 933L364 893L397 884.5" fill="none" stroke="#c8c8c8" strokeWidth="1" />
    <path d="M402 936H406V1035H402Z" fill="#a8a8a8" />
    <g fontFamily={MINI} fontSize="5" fill="#dcdcdc">
      {STAIR_DIMS.map(([x, y, w, r, t], i) => (
        <text key={i} x={x} y={y} textLength={w} lengthAdjust="spacingAndGlyphs" transform={r ? `rotate(-90 ${x} ${y})` : undefined}>{t}</text>
      ))}
    </g>
    <g fontFamily="'Noto Sans CJK SC', sans-serif" fill="#d8d800">
      <text x="410" y="866" fontSize="9.5" textLength="28" lengthAdjust="spacingAndGlyphs">1#楼梯</text>
      <text x="361" y="909" fontSize="9.5" textLength="26" lengthAdjust="spacingAndGlyphs">电梯井</text>
    </g>

    {/* title block */}
    <g fontFamily="'Noto Sans CJK SC', sans-serif" fill="#f0f000">
      <text x="798" y="905" fontSize="19" fontWeight="300" textLength="119" lengthAdjust="spacingAndGlyphs">基础梁配筋平面图</text>
      <text x="922" y="903" fontSize="13" fontWeight="300" textLength="25" lengthAdjust="spacingAndGlyphs">1:100</text>
      <text x="793" y="924" fontSize="10.5" textLength="150" lengthAdjust="spacingAndGlyphs">1:梁面结构标高-0.150m，梁砼强度等级C30。</text>
      <text x="793" y="938" fontSize="10.5" textLength="237" lengthAdjust="spacingAndGlyphs">2:主次梁相交处,主梁两侧加每侧箍加4@50箍筋,箍筋直径与主梁箍筋相同。</text>
      <text x="802" y="951" fontSize="10.5" textLength="56" lengthAdjust="spacingAndGlyphs">地梁钢筋全部焊接</text>
      <text x="800" y="965" fontSize="10.5" textLength="133" lengthAdjust="spacingAndGlyphs">基础底板迎水面混凝土保护层厚度40mm</text>
      <text x="800" y="979" fontSize="10.5" textLength="137" lengthAdjust="spacingAndGlyphs">基础梁混凝土采用防水混凝土,抗渗等级S6.</text>
    </g>
    <path d="M793 907.7H952M793 910.7H952" stroke="#f0f0f0" strokeWidth="1.2" />

    {/* crosshair and ucs */}
    <path d="M31 1135.5H1566M1530.5 155V1210" stroke="#e6e6e6" strokeWidth="1" />
    <rect x="1524.5" y="1129.5" width="12" height="12" fill="none" stroke="#e6e6e6" />
    <path d="M56 1138V1185H103" fill="none" stroke="#c8c8c8" strokeWidth="1" />
    <rect x="52" y="1181" width="8" height="8" fill="none" stroke="#c8c8c8" />
    <g fontFamily="'Noto Sans', sans-serif" fill="#c8c8c8" fontSize="17" fontWeight="300">
      <text x="57" y="1135">Y</text>
      <text x="107" y="1185">X</text>
    </g>
  </svg>
);

const ViewCube = () => (
  <div className="absolute inset-0 pointer-events-none text-[#8f8f8f] text-[21px] leading-none">
    <div className="absolute left-[1400px] top-[20px] w-[114px] h-[114px] rounded-full border-[13px] border-[#6e6e6e]/40" />
    <span className="absolute left-[1447px] top-[14px]">北</span>
    <span className="absolute left-[1447px] top-[123px]">南</span>
    <span className="absolute left-[1395px] top-[67px]">西</span>
    <span className="absolute left-[1500px] top-[67px]">东</span>
    <div className="absolute left-[1433px] top-[52px] w-[48px] h-[48px] bg-[#a9a9aa] flex items-center justify-center">
      <div className="w-[30px] h-[30px] bg-[#9c9c9e] flex items-center justify-center text-[28px] text-[#4e4e50] font-light">上</div>
    </div>
    <div className="absolute left-[1435px] top-[158px] w-[45px] h-[16px] rounded-[5px] bg-[#55555c] border border-[#6a6a70] flex items-center justify-center gap-[6px] text-[11px] text-[#8e8e92] font-['Liberation_Sans',sans-serif]">
      WCS <Caret className="border-t-[#77777c]" />
    </div>
  </div>
);

const HISTORY = [
  { t: '命令: _textedit', w: 'w-[99px]' },
  { t: '当前设置: 编辑模式 = Multiple', w: 'w-[186px]' },
  { t: '选择注释对象或 [放弃(U)/模式(M)]: *取消*', w: 'w-[253px]' },
];

const CommandLine = () => (
  <>
    <div className="absolute left-[585px] top-[976px] flex flex-col gap-[5px] font-['Liberation_Mono','Noto_Sans_CJK_SC',monospace] text-[11px] leading-[14px] text-[#cfcfcf]">
      {HISTORY.map((l) => (
        <div key={l.t} className={`${l.w} h-[14px] px-[1px] rounded-[1px] bg-[#505050]/90 whitespace-nowrap overflow-hidden`}>{l.t}</div>
      ))}
    </div>
    <div className="absolute left-[525px] top-[1030px] w-[484px] h-[25px] flex bg-[#2b323d] rounded-t-[2px]">
      <div className="w-[55px] flex items-center shrink-0">
        <Grip />
        <X size={13} strokeWidth={1.8} className="ml-[6px] text-[#b4bac2]" />
        <Wrench size={15} fill="#b4bac2" className="ml-[8px] text-[#b4bac2] -scale-x-100" />
      </div>
      <div className="w-[429px] flex items-center bg-[#b5b5b5] border border-[#6d6d6d] rounded-[1px]">
        <Ic n="prompt" className="!w-[16px] !h-[16px] ml-[3px]" />
        <span className="ml-[2px]"><Caret className="border-t-[#444]" /></span>
        <span className="ml-[9px] text-[12px] italic text-[#6f6f6f]">键入命令</span>
        <span className="ml-auto mr-[3px] w-0 h-0 border-x-[3.5px] border-x-transparent border-b-[5px] border-b-[#555]" />
      </div>
    </div>
  </>
);

const MARKS = [
  [28, 382], [579, 382], [1130, 382],
  [-125, 755], [426, 755], [977, 755], [1528, 755],
  [278, 1117], [829, 1117], [1380, 1117],
];

const Watermarks = () => (
  <div className="absolute inset-0 pointer-events-none overflow-hidden font-['Liberation_Sans','Noto_Sans_CJK_SC',sans-serif] text-[36px] leading-none text-black/[.2] [-webkit-text-stroke:3.5px_rgba(255,255,255,.12)] [paint-order:stroke_fill]">
    {MARKS.map(([x, y]) => (
      <span key={`${x}-${y}`} className="absolute whitespace-nowrap origin-[0_100%] -rotate-45" style={{ left: x, top: y - 36 }}>
        知末网www.znzmo.com
      </span>
    ))}
  </div>
);

const Cell = ({ n, on, className = '' }) => (
  <span className={`w-[22px] h-full shrink-0 flex items-center justify-center ${on ? 'bg-[#4f8cc4]' : ''} ${className}`}><Ic n={n} className="!w-[17px] !h-[17px]" /></span>
);
const SCaret = () => <span className="w-[14px] h-full shrink-0 flex items-center justify-center"><Caret /></span>;
const SGroup = ({ className = '', children }) => (
  <div className={`flex gap-px h-full shrink-0 bg-[#3b4453] items-center ${className}`}>{children}</div>
);

const StatusBar = () => (
  <div className="h-[28px] shrink-0 pt-[2px] pb-[4px] pl-[4px] flex gap-[2px] bg-[#222933] text-[#e4e7eb] text-[12px]">
    <div className="w-[361px] h-full bg-[#3b4453] shrink-0" />
    <div className="ml-[2px] w-[196px] h-full bg-[#3b4453] shrink-0 flex items-center justify-end pr-[4px]">
      <span className="origin-right scale-x-[.88] whitespace-nowrap font-['Noto_Sans',sans-serif]">-15154.3962, 107283.4763, 0.0000</span>
    </div>
    <div className="ml-px w-[28px] h-full bg-[#3b4453] shrink-0 flex items-center justify-center">模型</div>
    <SGroup className="ml-px"><Cell n="grid" /><Cell n="snapg" /><SCaret /></SGroup>
    <SGroup className="ml-[2px]">
      <Cell n="infer" /><Cell n="dyn" on /><Cell n="ortho" /><Cell n="polar" /><SCaret />
      <Cell n="iso" /><SCaret /><Cell n="angle" /><Cell n="osnap" on /><SCaret />
    </SGroup>
    <SGroup><Cell n="lw" /><Cell n="trans" on /><Cell n="selcyc" /><Cell n="snap3d" /><SCaret /></SGroup>
    <SGroup className="ml-px"><Cell n="dynucs" on /><Cell n="dyn3" /><SCaret /><Cell n="gizmo" on /><SCaret /></SGroup>
    <SGroup>
      <Cell n="annoA" on /><Cell n="annoB" /><Cell n="annoC" />
      <span className="w-[53px] text-center origin-center scale-x-[.88] whitespace-nowrap">1:1 / 100%</span>
      <SCaret />
    </SGroup>
    <SGroup><Cell n="gear" /><SCaret /></SGroup>
    <SGroup className="-ml-px"><Cell n="plus" /></SGroup>
    <SGroup className="w-[90px]"><Cell n="ruler" /><span className="ml-[4px]">小数</span><span className="ml-auto h-full"><SCaret /></span></SGroup>
    <SGroup><Cell n="qp" /></SGroup>
    <SGroup><Cell n="lockui" /><SCaret /></SGroup>
    <SGroup className="-ml-px"><Cell n="isolate" /></SGroup>
    <SGroup className="ml-[2px]"><Cell n="hw" on /><Cell n="update" className="ml-[5px]" /><Cell n="perf" className="ml-[5px]" /></SGroup>
    <SGroup className="ml-[3px]"><Cell n="clean" /></SGroup>
    <SGroup className="ml-[3px]"><Cell n="menu" /></SGroup>
  </div>
);

export default function App() {
  return (
    <div className="relative w-[1600px] h-[1270px] overflow-hidden bg-[#0a84c8] pt-px px-[2px] pb-[2px] font-['Noto_Sans_CJK_SC','Noto_Sans',sans-serif]">
      <div className="h-full flex flex-col bg-[#3c4554]">
        {/* title bar */}
        <div className="h-[29px] shrink-0 flex items-center bg-[#222933] text-[#e2e5e9] text-[12.5px]">
          <div className="w-[507px] shrink-0 flex items-center pl-[12px]">
            <span className="w-[22px] h-[21px] flex items-center justify-center bg-[#d5203f] border-b-[2px] border-r-[2px] border-[#8f1029] text-white font-bold text-[15px] font-['Liberation_Sans',sans-serif] leading-none">A</span>
            <span className="ml-[4px] mr-[10px]"><Caret /></span>
            {['new', 'open', 'save', 'saveas', 'devOpen', 'devSave', 'print', 'undo'].map((n) => (
              <span key={n} className="w-[22px] flex justify-center"><Ic n={n} /></span>
            ))}
            <span className="w-[14px] flex justify-center"><Caret /></span>
            <span className="w-[20px] flex justify-center"><Ic n="redoDim" /></span>
            <span className="w-[12px] flex justify-center"><Caret className="border-t-[#6b7482]" /></span>
            <span className="w-[14px] flex justify-center"><Ic n="lines" className="!w-[14px] !h-[14px]" /></span>
            <span className="ml-[4px]"><Ic n="plane" className="!w-[17px] !h-[17px]" /></span>
            <span className="ml-[2px] text-[#9dc4e6] text-[12px]">共享</span>
          </div>
          <div className="w-[490px] shrink-0 flex items-center whitespace-nowrap">
            <span className="font-['Noto_Sans',sans-serif] scale-x-[.93] origin-left w-[149px]">Autodesk AutoCAD 2025</span>
            <span className="tracking-[-.35px]">某厂区框架办公楼结构设计图.dwg</span>
          </div>
          <span className="shrink-0 w-0 h-0 border-y-[4px] border-y-transparent border-l-[4px] border-l-[#c3c8cf]" />
          <div className="ml-[5px] shrink-0 w-[166px] h-[18px] bg-[#454e5e] flex items-center pl-[3px] text-[11.5px] italic text-[#9aa1ab] whitespace-nowrap">键入关键字或短语</div>
          <Ic n="search" className="ml-[5px] !w-[16px] !h-[16px]" />
          <Ic n="user" className="ml-[6px] !w-[17px] !h-[17px]" />
          <span className="ml-[3px] w-[76px] shrink-0 whitespace-nowrap">登录</span>
          <Caret />
          <Ic n="cart" className="ml-[10px] !w-[16px] !h-[16px]" />
          <Ic n="adsk" className="ml-[6px] !w-[16px] !h-[16px]" />
          <span className="ml-[4px]"><Caret /></span>
          <span className="ml-[7px] w-px h-[16px] bg-[#4a5361]" />
          <Ic n="help" className="ml-[10px]" />
          <span className="ml-[5px]"><Caret /></span>
          <div className="ml-[78px] flex items-center gap-[34px] text-[#d6dade]">
            <span className="w-[9px] h-px bg-[#d6dade]" />
            <span className="w-[9px] h-[12px] border border-[#d6dade]" />
            <X size={14} strokeWidth={1.2} />
          </div>
        </div>

        {/* menu bar */}
        <div className="h-[20px] shrink-0 flex items-center pl-[14px] gap-[20.5px] bg-[#222933] border-b border-[#323a47] text-[12px] text-[#c0c6cf]">
          {MENUS.map((m) => <span key={m} className="whitespace-nowrap">{m}</span>)}
          <div className="ml-auto mr-[9px] flex items-center gap-[20px]">
            <span className="w-[9px] h-px bg-[#d6dade]" />
            <span className="w-[9px] h-[11px] border border-[#d6dade]" />
            <X size={14} strokeWidth={1.2} className="text-[#d6dade]" />
          </div>
        </div>

        {/* file tabs */}
        <div className="h-[23px] shrink-0 flex items-center bg-[#222933] text-[12px] text-[#e2e5e9]">
          <span className="ml-[16px]"><Ham /></span>
          <span className="ml-[10px]"><Slash /></span>
          <span className="ml-[12px]">开始</span>
          <div className="ml-[7px] w-[195px] h-full flex items-center bg-[#3c4554] [clip-path:polygon(8px_0,100%_0,calc(100%_-_8px)_100%,0_100%)] pl-[16px] text-white font-medium whitespace-nowrap">
            <span className="tracking-[-.35px]">某厂区框架办公楼结构设计图*</span>
            <X size={11} className="ml-[7px] text-[#98a0ab]" />
          </div>
          <Ic n="plus" className="ml-[7px] !w-[15px] !h-[15px]" />
          <span className="ml-[11px]"><Slash /></span>
        </div>

        {/* toolbars */}
        <div className="h-[80px] shrink-0 flex flex-col pl-[3px] pt-[6px] gap-[3px] border-b-[2px] border-[#2f3642]">
          <div className="flex items-center h-[22px] text-[12px]">
            <Panel className="w-[604px] h-full"><Strip items={ROW1A} /></Panel>
            <Panel className="ml-[2px] w-[375px] h-full">
              <span className="w-[7px] flex justify-center"><Grip /></span>
              <span className="w-[21.4px] flex justify-center"><Ic n="layer" /></span>
              <Drop className="w-[281px]">
                <Ic n="bulb" className="ml-[2px] !w-[17px] !h-[17px]" />
                <Ic n="sun" className="ml-[1px] !w-[17px] !h-[17px]" />
                <Ic n="frozen" className="ml-[2px] !w-[17px] !h-[17px]" />
                <Ic n="lock" className="!w-[17px] !h-[17px]" />
                <span className="ml-[2px] w-[13px] h-[13px] border border-[#8a8a8a] bg-white" />
                <span className="ml-[7px]">0</span>
              </Drop>
              <Strip items={['layerA', 'layerB', 'layerC']} />
            </Panel>
            <span className="ml-[3px]"><Grip /></span>
            <Drop className="w-[142px]">
              <span className="ml-[2px] w-[13px] h-[14px] border border-[#8a8a8a] bg-white" />
              <span className="ml-[4px]">ByLayer</span>
            </Drop>
            <Drop className="ml-[4px] w-[150px]">
              <span className="ml-[4px] w-[57px] h-px bg-black" />
              <span className="ml-[5px]">ByLayer</span>
            </Drop>
            <Drop className="ml-[5px] w-[118px]">
              <span className="ml-[4px] w-[33px] h-px bg-black" />
              <span className="ml-[5px]">ByLayer</span>
            </Drop>
            <Drop className="ml-[5px] w-[113px]" dim>
              <span className="ml-[10px]">ByColor</span>
            </Drop>
          </div>
          <div className="flex items-center h-[22px] text-[12px]">
            <Panel className="w-[600px] h-full">
              <Strip items={ROW2A} />
              <Drop className="w-[113px] !h-full">
                <span className="ml-[17px] font-['Noto_Sans',sans-serif]">Standard</span>
              </Drop>
              <Strip items={['dimStyle']} />
            </Panel>
            <Panel className="ml-px w-[457px] h-full"><Strip items={ROW2B} /></Panel>
          </div>
          <div className="flex items-center h-[22px]">
            <Panel className="w-[72px] h-full"><Strip items={['g', 'bookPen', 'bookChk', 'layerRed']} /></Panel>
          </div>
        </div>

        {/* work area */}
        <div className="flex-1 min-h-0 flex pt-[2px] pb-[3px]">
          <div className="w-[29px] shrink-0 pl-[2px]">
            <div className="w-[23px] h-[421px] pt-[10px] bg-[#39424f] border border-[#2b323d] flex flex-col items-center relative">
              <span className="absolute top-[3px] w-[15px] h-[3px] bg-[repeating-linear-gradient(90deg,#8d95a1_0_1px,transparent_1px_3px)]" />
              {LEFT.map((n) => <span key={n} className="h-[20.4px] flex items-center"><Ic n={n} className="!w-[18px] !h-[18px]" /></span>)}
            </div>
          </div>
          <div className="relative flex-1 min-w-0 bg-black overflow-hidden">
            <Drawing />
            <ViewCube />
            <CommandLine />
          </div>
          <div className="w-[32px] shrink-0 pl-[4px]">
            <div className="w-[23px] h-[378px] pt-[8px] bg-[#39424f] border border-[#2b323d] flex flex-col items-center relative">
              <span className="absolute top-[3px] w-[15px] h-[3px] bg-[repeating-linear-gradient(90deg,#8d95a1_0_1px,transparent_1px_3px)]" />
              {RIGHT.map((n) => <span key={n} className="h-[20.4px] flex items-center"><Ic n={n} className="!w-[18px] !h-[18px]" /></span>)}
            </div>
          </div>
        </div>

        {/* layout tabs */}
        <div className="h-[27px] shrink-0 flex items-start bg-[#222933] text-[12px] text-[#e2e5e9]">
          <span className="ml-[16px] mt-[5px]"><Ham /></span>
          <div className="ml-[7px] w-[55px] h-[23px] flex items-center justify-center bg-[#3c4554] [clip-path:polygon(8px_0,100%_0,calc(100%_-_8px)_100%,0_100%)] text-white font-bold">模型</div>
          <span className="ml-[6px] mt-[3px]">布局1</span>
          <span className="ml-[8px] mt-[3px]"><Slash /></span>
          <Ic n="plus" className="ml-[11px] mt-[5px] !w-[15px] !h-[15px]" />
          <span className="ml-[11px] mt-[3px]"><Slash /></span>
        </div>

        <StatusBar />
      </div>

      <Watermarks />

      {/* brand stamp */}
      <span className="absolute left-[1404px] top-[1125px] text-[62px] leading-[88px] font-normal text-[#d8d8d8]/90 pointer-events-none">知末</span>
      <span className="absolute left-[1361px] top-[1210px] text-[32px] leading-[40px] text-white font-['Roboto',sans-serif] font-medium whitespace-nowrap pointer-events-none">ID: 1181649836</span>
    </div>
  );
}
